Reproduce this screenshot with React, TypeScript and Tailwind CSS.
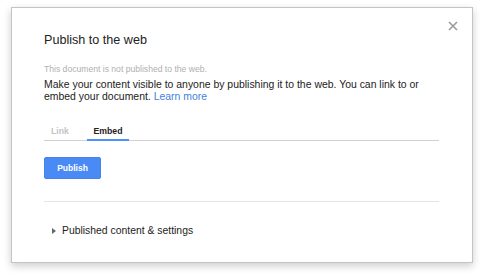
import React from "react";

export default function App() {
  return (
    <div
      className="w-[483px] h-[275px] bg-white overflow-hidden"
      style={{ fontFamily: '"Liberation Sans", Arial, sans-serif' }}
    >
      <div className="relative ml-[11px] mt-[7px] w-[462px] h-[256px] bg-white border border-[#c4c4c4] shadow-[0_3px_8px_rgba(0,0,0,0.2)] flex flex-col pl-[32px] pr-[33px] pt-[24px]">
        <button className="absolute right-[14px] top-[13px] w-[10px] h-[10px] flex items-center justify-center">
          <svg width="10" height="10" viewBox="0 0 10 10">
            <path d="M1 1 L9 9 M9 1 L1 9" stroke="#9a9a9a" strokeWidth="1.6" />
          </svg>
        </button>
        <div className="text-[12.6px] leading-[16px] text-[#222]">Publish to the web</div>
        <div className="mt-[16px] text-[8.6px] leading-[10px] text-[#b0b0b0]">
          This document is not published to the web.
        </div>
        <div className="mt-[5px] text-[10.45px] leading-[12px] text-[#222]">
          Make your content visible to anyone by publishing it to the web. You can link to or embed your
          document. <span className="text-[#3f7fdc]">Learn more</span>
        </div>
        <div className="mt-[22px] flex border-b border-[#d0d0d0] h-[16px]">
          <div className="w-[43px] pl-[7px] text-[8.7px] font-bold text-[#c3c3c3] leading-[12px]">Link</div>
          <div className="w-[42px] text-center text-[8.7px] font-bold text-[#222] leading-[12px] border-b-2 border-[#4d90fe] mb-[-1px] h-[16px]">
            Embed
          </div>
        </div>
        <div className="mt-[13px]">
          <button className="w-[57px] h-[22px] rounded-[2px] bg-[#4a8af4] border border-[#4582ea] text-white text-[8.5px] font-bold">
            Publish
          </button>
        </div>
        <div className="mt-[22px] border-t border-[#e5e5e5]" />
        <div className="mt-[23px] flex items-center">
          <svg width="4" height="6" viewBox="0 0 4 6" className="ml-[8px] mr-[6px]">
            <path d="M0 0 L4 3 L0 6 Z" fill="#666" />
          </svg>
          <span className="text-[10.4px] leading-[12px] text-[#222]">Published content &amp; settings</span>
        </div>
      </div>
    </div>
  );
}
